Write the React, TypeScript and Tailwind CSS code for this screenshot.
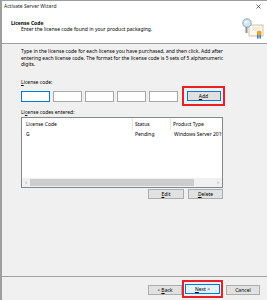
import React from "react";

const F = { fontFamily: '"Noto Sans", "Open Sans", sans-serif' };

function Btn({ children, w, primary }: { children: React.ReactNode; w: string; primary?: boolean }) {
  return (
    <div
      className={`${w} h-[10px] flex items-center justify-center text-[5px] leading-none text-black ${
        primary ? "bg-[#e5f1fb] border border-[#0078d7]" : "bg-[#e1e1e1] border border-[#adadad]"
      }`}
    >
      {children}
    </div>
  );
}

function Icon() {
  return (
    <svg width="22" height="21" viewBox="0 0 22 21">
      <rect x="7" y="7" width="14" height="11" fill="#fbf8ef" stroke="#c9b98f" strokeWidth="0.8" />
      <line x1="10" y1="10" x2="18" y2="10" stroke="#d8cfb4" strokeWidth="0.6" />
      <line x1="10" y1="12" x2="15" y2="12" stroke="#d8cfb4" strokeWidth="0.6" />
      <rect x="15" y="16" width="1.6" height="4.5" fill="#3a77c9" />
      <rect x="17.4" y="16" width="1.6" height="4.5" fill="#3a77c9" />
      <circle cx="17.2" cy="15" r="2.4" fill="#f1a324" />
      <line x1="4.5" y1="9" x2="4.5" y2="15" stroke="#8a8f96" strokeWidth="2" />
      <circle cx="5" cy="5" r="4.2" fill="#cfe6f7" stroke="#8a9aa8" strokeWidth="0.9" />
      <circle cx="4" cy="4" r="1.6" fill="#eef7fd" />
    </svg>
  );
}

export default function App() {
  return (
    <div
      style={F}
      className="w-[267px] h-[300px] overflow-hidden bg-[#f0f0f0] border-l-[2px] border-t border-[#9e9e9e] flex flex-col text-black"
    >
      {/* title bar */}
      <div className="h-[11px] bg-white flex items-center justify-between pl-[2px] pr-[6px]">
        <span className="text-[5px] leading-none text-[#222]">Activate Server Wizard</span>
        <svg width="5" height="5" viewBox="0 0 5 5">
          <path d="M0.5 0.5 L4.5 4.5 M4.5 0.5 L0.5 4.5" stroke="#333" strokeWidth="0.7" />
        </svg>
      </div>
      {/* header */}
      <div className="h-[32px] bg-white border-b border-[#a0a0a0] flex justify-between">
        <div className="pl-[9px] pt-[8px] flex flex-col">
          <span className="text-[5px] leading-[6px] font-bold">License Code</span>
          <span className="text-[5px] leading-[6px] pl-[10px]">
            Enter the license code found in your product packaging.
          </span>
        </div>
        <div className="pt-[6px] pr-[3px]">
          <Icon />
        </div>
      </div>
      {/* body */}
      <div className="flex-1 pl-[19px] pr-[42px] flex flex-col">
        <p className="mt-[4px] text-[5px] leading-[6.7px]">
          Type in the license code for each license you have purchased, and then click. Add after entering each license
          code. The format for the license code is 5 sets of 5 alphanumeric digits.
        </p>
        <div className="mt-[11px] text-[5px] leading-[6px]">
          <span className="underline">L</span>icense code:
        </div>
        <div className="mt-[1px] flex items-center h-[20px]">
          <div className="flex gap-[3px]">
            <div className="w-[29px] h-[11px] bg-white border border-[#0078d7]" />
            <div className="w-[29px] h-[11px] bg-white border border-[#a8a8a8]" />
            <div className="w-[29px] h-[11px] bg-white border border-[#a8a8a8]" />
            <div className="w-[29px] h-[11px] bg-white border border-[#a8a8a8]" />
            <div className="w-[29px] h-[11px] bg-white border border-[#a8a8a8]" />
          </div>
          <div className="ml-[4px] w-[46px] h-[20px] border-[2px] border-[#e8202a] flex items-center justify-center">
            <div className="w-[34px] h-[10px] bg-[#e1e1e1] border border-[#0078d7] flex items-center justify-center text-[5px] leading-none">
              <span className="underline">A</span>dd
            </div>
          </div>
        </div>
        <div className="mt-[3px] text-[5px] leading-[6px]">
          Li<span className="underline">c</span>ense codes entered:
        </div>
        <div className="mt-[2px] w-[202px] h-[71px] bg-white border border-[#828790] flex flex-col">
          <div className="flex h-[12px] items-center text-[5px] leading-none">
            <div className="w-[111px] h-full pl-[4px] flex items-center border-r border-[#e5e5e5]">License Code</div>
            <div className="w-[38px] h-full pl-[2px] flex items-center border-r border-[#e5e5e5]">Status</div>
            <div className="flex-1 pl-[2px] whitespace-nowrap overflow-hidden">Product Type</div>
          </div>
          <div className="flex h-[9px] items-center text-[5px] leading-none">
            <div className="w-[111px] pl-[4px]">G</div>
            <div className="w-[38px] pl-[2px]">Pending</div>
            <div className="flex-1 pl-[3px] whitespace-nowrap overflow-hidden">Windows Server 2019</div>
          </div>
          <div className="flex-1" />
          <div className="h-[9px] flex items-center bg-[#f0f0f0] text-[5px] text-[#606060] leading-none">
            <div className="w-[8px] text-center">‹</div>
            <div className="w-[164px] h-[7px] bg-[#cdcdcd]" />
            <div className="flex-1" />
            <div className="w-[8px] text-center">›</div>
          </div>
        </div>
        <div className="mt-[1px] w-[202px] flex justify-end gap-[4px]">
          <Btn w="w-[36px]">
            <span className="underline">E</span>dit
          </Btn>
          <Btn w="w-[35px]">
            <span className="underline">D</span>elete
          </Btn>
        </div>
      </div>
      {/* footer */}
      <div className="h-[24px] border-t border-[#a0a0a0] flex items-start pt-[3px]">
        <div className="ml-[146px] h-[10px] mt-[5px]">
          <Btn w="w-[34px]">
            &lt; <span className="underline ml-[1px]">B</span>ack
          </Btn>
        </div>
        <div className="w-[41px] h-[18px] border-[2px] border-[#e8202a] flex items-center justify-center">
          <Btn w="w-[35px]" primary>
            <span className="underline">N</span>ext &gt;
          </Btn>
        </div>
        <div className="ml-[3px] mt-[5px]">
          <Btn w="w-[34px]">Cancel</Btn>
        </div>
      </div>
    </div>
  );
}
